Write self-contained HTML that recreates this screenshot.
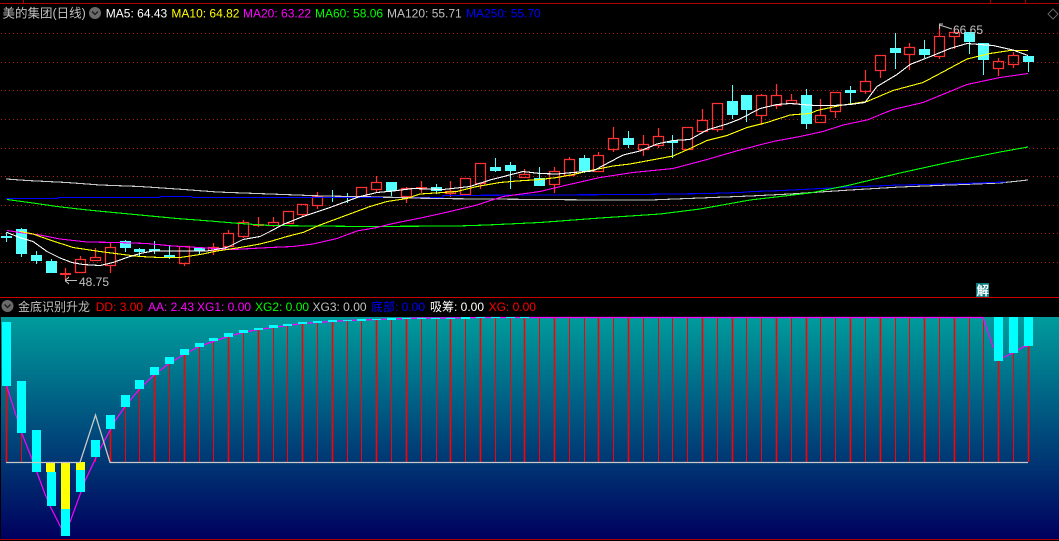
<!DOCTYPE html>
<html lang="zh"><head><meta charset="utf-8"><title>美的集团(日线)</title>
<style>
html,body{margin:0;padding:0;background:#000;width:1059px;height:541px;overflow:hidden}
svg{display:block}
text{font-family:"Liberation Sans","Noto Sans CJK SC",sans-serif;font-size:12px}
</style></head><body>
<svg width="1059" height="541" viewBox="0 0 1059 541" xmlns="http://www.w3.org/2000/svg">
<defs><linearGradient id="g" x1="0" y1="0" x2="0" y2="1"><stop offset="0" stop-color="#009c9c"/><stop offset="1" stop-color="#00005e"/></linearGradient></defs>
<rect width="1059" height="541" fill="#000"/>
<!-- frame -->
<g shape-rendering="crispEdges">
<rect x="0" y="3" width="1059" height="1" fill="#b00000"/>
<rect x="23" y="0" width="1" height="3" fill="#b00000"/>
<rect x="990" y="0" width="1" height="3" fill="#b00000"/>
<rect x="1025" y="0" width="1" height="3" fill="#b00000"/>
<rect x="0" y="297" width="1059" height="1" fill="#c80000"/>
<!-- grid -->
<path d="M1 33.500H1059M1 62.500H1059M1 90.500H1059M1 119.500H1059M1 148.500H1059M1 176.500H1059M1 205.500H1059M1 233.500H1059M1 262.500H1059" stroke="#aa1818" stroke-width="1" stroke-dasharray="1 3" fill="none"/>
</g>
<path d="M1053 9l5 5-5 5-5-5z" fill="none" stroke="#666" stroke-width="1"/>
<!-- red candles -->
<g fill="none" stroke="#ff3232" stroke-width="1.250">
<path d="M80.500 256V259M80.500 272V273M95.500 248V257M95.500 260V261M110.500 243V247M110.500 265V273M184.500 263V266M213.500 243V247M213.500 250V255M228.500 230V233M228.500 246V247M243.500 220V222M243.500 236V238M273.500 217V222M273.500 225V227M302.500 214V216M317.500 192V196M317.500 205V209M376.500 176V182M376.500 189V192M406.500 187V188M406.500 196V203M450.500 181V191M450.500 193V197M465.500 194V195M480.500 183V189M524.500 169V174M524.500 177V178M554.500 167V171M554.500 184V193M569.500 157V159M569.500 175V176M598.500 152V155M598.500 171V172M613.500 127V138M613.500 149V152M643.500 135V144M643.500 149V156M658.500 128V136M658.500 145V148M702.500 109V120M702.500 131V133M717.500 129V132M761.500 94V95M761.500 115V125M776.500 84V95M776.500 105V109M791.500 94V100M835.500 111V118M820.500 99V115M865.500 70V81M865.500 91V94M880.500 70V78M909.500 43V47M909.500 54V70M939.500 25V36M939.500 56V59M954.500 28V32M954.500 36V49M998.500 58V61M998.500 68V76M1013.500 52V55M1013.500 64V68"/>
<path d="M75.500 259.500H85.500V272.500H75.500ZM90.500 257.500H100.500V260.500H90.500ZM105.500 247.500H115.500V265.500H105.500ZM179.500 246.500H189.500V263.500H179.500ZM208.500 247.500H218.500V250.500H208.500ZM223.500 233.500H233.500V246.500H223.500ZM238.500 222.500H248.500V236.500H238.500ZM268.500 222.500H278.500V225.500H268.500ZM283.500 211.500H293.500V223.500H283.500ZM297.500 204.500H307.500V214.500H297.500ZM312.500 196.500H322.500V205.500H312.500ZM356.500 187.500H366.500V196.500H356.500ZM371.500 182.500H381.500V189.500H371.500ZM401.500 188.500H411.500V196.500H401.500ZM445.500 191.500H455.500V193.500H445.500ZM460.500 178.500H470.500V194.500H460.500ZM475.500 163.500H485.500V183.500H475.500ZM519.500 174.500H529.500V177.500H519.500ZM549.500 171.500H559.500V184.500H549.500ZM564.500 159.500H574.500V175.500H564.500ZM593.500 155.500H603.500V171.500H593.500ZM608.500 138.500H618.500V149.500H608.500ZM638.500 144.500H648.500V149.500H638.500ZM653.500 136.500H663.500V145.500H653.500ZM682.500 127.500H692.500V149.500H682.500ZM697.500 120.500H707.500V131.500H697.500ZM712.500 103.500H722.500V129.500H712.500ZM756.500 95.500H766.500V115.500H756.500ZM771.500 95.500H781.500V105.500H771.500ZM786.500 100.500H796.500V103.500H786.500ZM815.500 115.500H825.500V122.500H815.500ZM830.500 92.500H840.500V111.500H830.500ZM860.500 81.500H870.500V91.500H860.500ZM875.500 55.500H885.500V70.500H875.500ZM904.500 47.500H914.500V54.500H904.500ZM934.500 36.500H944.500V56.500H934.500ZM949.500 32.500H959.500V36.500H949.500ZM993.500 61.500H1003.500V68.500H993.500ZM1008.500 55.500H1018.500V64.500H1008.500Z"/>
<path d="M65.500 268V280M258.500 217V227M421.500 181V193"/>
</g>
<g shape-rendering="crispEdges" fill="#ff3232">
<rect x="60" y="273" width="11" height="2"/><rect x="253" y="224" width="11" height="2"/><rect x="416" y="187" width="11" height="2"/>
</g>
<!-- cyan candles -->
<g shape-rendering="crispEdges">
<path fill="none" stroke="#54ffff" stroke-width="1" d="M6.500 232V242M21.500 228V257M36.500 251V264M51.500 259V273M125.500 240V252M139.500 248V257M154.500 241V254M169.500 246V259M199.500 247V254M332.500 190V202M347.500 193V203M391.500 182V196M436.500 184V194M495.500 158V172M510.500 162V189M539.500 167V186M584.500 155V173M628.500 131V148M672.500 135V158M732.500 85V119M746.500 95V122M806.500 89V129M850.500 86V105M895.500 33V69M924.500 40V58M969.500 32V54M983.500 43V75M1028.500 56V72"/>
<path fill="#54ffff" d="M1 236h11v2H1zM16 229h11v25H16zM31 255h11v6H31zM46 261h11v12H46zM120 241h11v7h-11zM134 249h11v3h-11zM149 249h11v2h-11zM164 255h11v2h-11zM194 248h11v3h-11zM386 182h11v9h-11zM431 187h11v4h-11zM490 167h11v4h-11zM505 165h11v6h-11zM534 178h11v8h-11zM579 158h11v13h-11zM623 138h11v7h-11zM667 141h11v2h-11zM727 101h11v14h-11zM741 95h11v15h-11zM801 95h11v29h-11zM845 90h11v3h-11zM890 48h11v5h-11zM919 49h11v6h-11zM964 32h11v10h-11zM978 43h11v17h-11zM1023 56h11v6h-11z"/>
</g>
<!-- MAs -->
<g fill="none" shape-rendering="crispEdges" stroke-width="1.100">
<polyline stroke="#c8c8c8" points="6,179 27,180.500 67,182.500 100,185 140,186.500 177,189 217,192 270,194 323,196 383,197 430,198.500 540,199.500 600,200 650,200 700,198 750,196 790,194 850,190 900,187 950,185 1000,183 1028,180"/>
<polyline stroke="#0000ff" points="6,198.500 58,198.500 58,197.500 160,197.500 160,196.500 192,196.500 192,197.500 443,197.500 443,195.500 637,194.500 710,193.500 740,192.500 753,191.500 783,190.500 850,187 900,185 950,184 1006,182"/>
<polyline stroke="#c8c8c8" points="383,197.500 430,198"/>
<polyline stroke="#00ff00" points="7,199.500 33,203 57,206.500 83,209.500 103,211.500 140,215 177,218.500 210,221 240,223.500 270,225.500 363,226.500 457,226 487,225 540,222.500 600,218 660,214 700,209 750,200 810,193 850,185 900,173 950,162 1000,152 1028,147"/>
<polyline stroke="#ff00ff" points="7,230.500 20,232.500 40,235 60,239 87,242 117,242.500 147,243.500 173,246 207,248 233,249.500 270,247.500 293,246.500 313,244 337,238.500 357,231 377,227.500 393,223.500 423,217.500 450,211.500 477,205 503,196.500 540,191.500 567,185 600,177.500 633,172.500 673,168.500 707,159.500 740,150 773,141.500 800,136.500 823,131.500 843,125 867,120 893,109.500 923,102.500 967,84.500 1000,77.500 1028,73.500"/>
<polyline stroke="#ffff00" points="20,231.500 33,234 50,240 73,247.500 100,251.500 127,255 140,256.500 160,257.500 180,257.500 200,254.500 217,251 240,247.500 260,244 270,241.500 287,236.500 303,232.500 320,225 347,215 370,206.500 387,201.500 407,198.500 420,194 443,192.500 457,191.500 477,186.500 500,182.500 517,181 540,179.500 557,177.500 573,174.500 593,170 613,166 630,164 657,159 673,156 690,148.500 707,140.500 727,135.500 747,127.500 767,122.500 790,115 810,113.500 817,110.500 840,105.500 867,101.500 893,90.500 923,82.500 940,73.500 967,59 990,53.500 1010,50.500 1028,50.500"/>
<polyline stroke="#ffffff" points="7,232.500 21,238 33,241.500 47,251.500 60,258 72,262.500 83,264.500 100,265.500 113,262.500 127,257.500 140,253.500 153,251 180,251 207,251 227,247.500 243,239.500 260,236.500 270,231.500 283,224.500 303,216.500 330,207.500 353,199 360,196.500 377,192.500 393,191 413,188.500 443,189.500 470,186.500 490,180 523,171.500 540,173.500 557,174 573,172.500 593,171 607,163.500 623,155 640,151 657,144 673,140.500 690,139.500 707,130 727,124 740,119 760,108.500 777,104.500 790,103.500 815,105.500 833,105.500 850,104.500 865,102.500 877,86.500 897,74.500 910,64.500 933,55.500 950,48.500 967,43.500 993,45.500 1013,50 1028,55.500"/>
</g>
<!-- price labels -->
<g fill="none" stroke="#c0c0c0" stroke-width="1">
<path d="M65 280.500H77M65 280.500L69 277M65 280.500L69 284" shape-rendering="crispEdges"/>
<path d="M939.500 29V24H943M939.500 25L952 29"/>
</g>
<text x="79" y="286" fill="#c0c0c0">48.75</text>
<text x="953" y="34" fill="#c0c0c0">66.65</text>
<!-- header 1 -->
<text x="2.500" y="17.500" fill="#c0c0c0" style="font-size:12.500px">美的集团(日线)</text>
<circle cx="95" cy="13" r="6" fill="#6a6a6a"/><path d="M92 11.500l3 3 3-3" fill="none" stroke="#1a1a1a" stroke-width="1.300"/>
<text x="105.800" y="17.500" fill="#ffffff">MA5: 64.43</text>
<text x="171.400" y="17.500" fill="#ffff00">MA10: 64.82</text>
<text x="243" y="17.500" fill="#ff00ff">MA20: 63.22</text>
<text x="315" y="17.500" fill="#00ff00">MA60: 58.06</text>
<text x="387" y="17.500" fill="#c0c0c0">MA120: 55.71</text>
<text x="466" y="17.500" fill="#0000ff">MA250: 55.70</text>
<!-- header 2 -->
<circle cx="7.500" cy="306" r="6" fill="#6a6a6a"/><path d="M4.500 304.500l3 3 3-3" fill="none" stroke="#1a1a1a" stroke-width="1.300"/>
<text x="18" y="311" fill="#c0c0c0">金底识别升龙</text>
<text x="95.700" y="311" fill="#ff0000">DD: 3.00</text>
<text x="148" y="311" fill="#ff00ff">AA: 2.43</text>
<text x="197" y="311" fill="#ff00ff">XG1: 0.00</text>
<text x="255" y="311" fill="#00ff00">XG2: 0.00</text>
<text x="312.500" y="311" fill="#c0c0c0">XG3: 0.00</text>
<text x="371" y="311" fill="#0000ff">底部: 0.00</text>
<text x="430" y="311" fill="#ffffff">吸筹: 0.00</text>
<text x="488.600" y="311" fill="#ff0000">XG: 0.00</text>
<!-- 解 badge -->
<rect x="976" y="283" width="13" height="14" fill="#0a7a80"/>
<text x="976.500" y="295" fill="#ffffff" style="font-size:12.500px;font-weight:bold">解</text>
<rect x="0" y="297" width="1059" height="1" fill="#c80000" shape-rendering="crispEdges"/>
<!-- lower pane -->
<rect x="1" y="317" width="1058" height="222" fill="url(#g)" shape-rendering="crispEdges"/>
<rect x="0" y="539" width="1059" height="1" fill="#a80000" shape-rendering="crispEdges"/>
<path fill="none" stroke="#ff0000" stroke-width="1" shape-rendering="crispEdges" d="M21.500 433V462M95.500 457V462M125.500 407V462M139.500 389V462M169.500 364V462M199.500 347V462M213.500 341V462M243.500 333V462M273.500 328V462M287.500 326V462M317.500 323V462M347.500 321V462M361.500 321V462M391.500 320V462M421.500 318V462M436.500 318V462M465.500 318V462M495.500 318V462M510.500 318V462M539.500 318V462M569.500 318V462M584.500 318V462M613.500 318V462M643.500 318V462M658.500 318V462M672.500 318V462M687.500 318V462M717.500 318V462M746.500 318V462M761.500 318V462M791.500 318V462M820.500 318V462M835.500 318V462M865.500 318V462M895.500 318V462M909.500 318V462M939.500 318V462M969.500 318V462M983.500 318V462M1013.500 353V462"/>
<path fill="none" stroke="#ff0000" stroke-width="1.600" d="M6.500 386V462M110.500 429V462M154.500 375V462M184.500 355V462M228.500 337V462M258.500 330V462M302.500 324V462M332.500 322V462M376.500 320V462M406.500 319V462M450.500 318V462M480.500 318V462M524.500 318V462M554.500 318V462M598.500 318V462M628.500 318V462M702.500 318V462M732.500 318V462M776.500 318V462M806.500 318V462M850.500 318V462M880.500 318V462M924.500 318V462M954.500 318V462M998.500 361V462M1028.500 346V462"/>
<polyline fill="none" stroke="#ff00ff" stroke-width="1.200" points="6.500,385.500 21.500,432.500 32,459 45,494 50,506 61,527.500 70,522 85,481 100,449 115,421 125,406.500 139.500,389 154,375 169,363.500 184,354.500 199,346.500 213,341.500 228,336.500 243,332.500 258,329.500 273,327.500 287,325.500 302,323.500 317,322.500 332,321.500 347,320.500 361,320 376,319.500 391,319 406,318.500 421,318 450,318 480,317.500 983,317.500 993,346.500 1003,357.500 1013,353 1024,346.500 1028,346"/>
<path fill="#00ffff" shape-rendering="crispEdges" d="M2 322h9v64H2zM17 381h9v52h-9zM32 430h9v42h-9zM47 472h9v34h-9zM61 509h9v27h-9zM76 470h9v22h-9zM91 440h9v17h-9zM106 415h9v14h-9zM121 395h9v12h-9zM135 380h9v9h-9zM150 367h9v8h-9zM165 357h9v7h-9zM180 349h9v6h-9zM195 343h9v4h-9zM209 338h9v3h-9zM224 333h9v4h-9zM239 330h9v3h-9zM254 328h9v2h-9zM269 325h9v3h-9zM283 324h9v2h-9zM298 322h9v2h-9zM313 321h9v2h-9zM328 320h9v2h-9zM343 320h9v1h-9zM357 319h9v2h-9zM372 319h9v1h-9zM387 318h9v2h-9zM402 318h9v1h-9zM417 318h9v1h-9zM431 318h9v1h-9zM446 318h9v1h-9zM461 317h9v2h-9zM476 317h9v1h-9zM491 317h9v1h-9zM506 317h9v1h-9zM520 317h9v1h-9zM994 317h9v44h-9zM1009 317h9v36h-9zM1024 317h9v29h-9z"/>
<path fill="#ffff00" shape-rendering="crispEdges" d="M46 462h9v10h-9zM61 462h9v47h-9zM76 462h9v8h-9z"/>
<polyline fill="none" stroke="#c8c8c8" stroke-width="1.300" points="6,462.500 80,462.500 95.500,415 110,462.500 1028,462.500"/>
</svg>
</body></html>
